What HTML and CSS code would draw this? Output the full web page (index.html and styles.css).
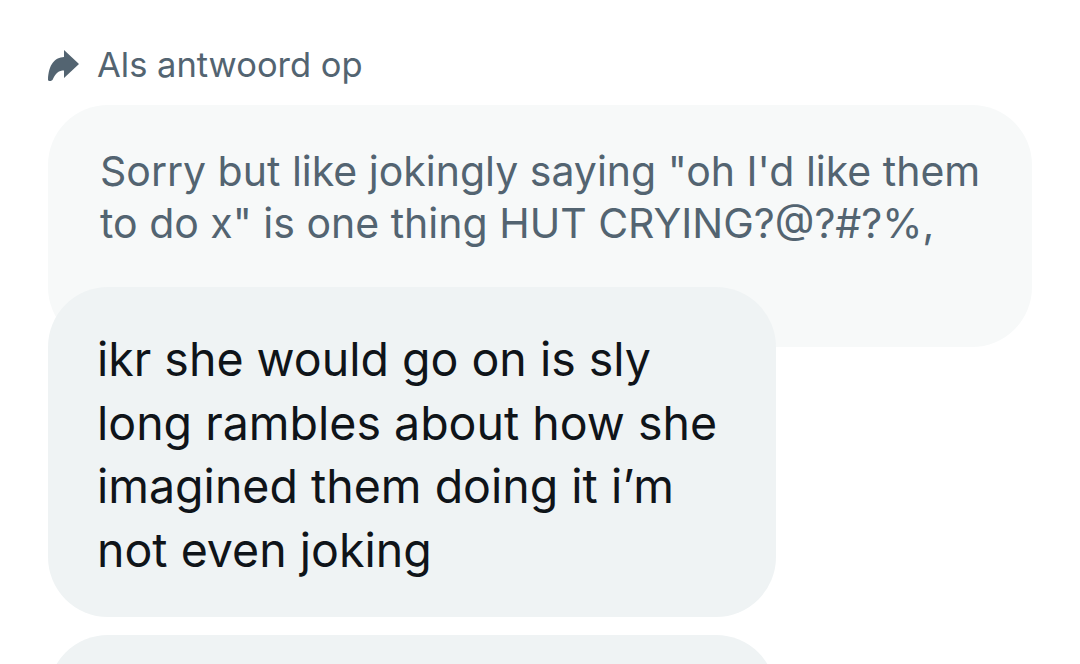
FILE: index.html
```html
<!DOCTYPE html>
<html>
<head>
<meta charset="utf-8">
<link rel="stylesheet" href="styles.css">
</head>
<body>
<div class="thread">
  <div class="reply-label">
    <svg class="reply-icon" viewBox="44 46 40 38" aria-hidden="true"><path d="M79 64 L64 50 V57 C55 57.5 48.5 64 48 80 C48.5 81.5 52 81.5 53 79 C55.5 73 59 70.5 64 70.5 V78 Z"/></svg>
    <span>Als antwoord op</span>
  </div>
  <div class="quote">
    <p class="quote-text">Sorry but like jokingly saying "oh I'd like them to do x" is one thing HUT CRYING?@?#?%,</p>
  </div>
  <div class="bubble">
    <p class="bubble-text">ikr she would go on is sly long rambles about how she imagined them doing it i’m not even joking</p>
  </div>
  <div class="bubble next"></div>
</div>
</body>
</html>
```
FILE: styles.css
```css
* { box-sizing: border-box; }
html, body { margin: 0; padding: 0; background: #ffffff; }
body { width: 1080px; height: 664px; overflow: hidden; font-family: Inter, "Noto Sans", sans-serif; }
.thread { padding: 43px 48px 0 48px; display: flex; flex-direction: column; align-items: flex-start; }
.reply-label { display: flex; align-items: center; gap: 13px; color: #536471; font-size: 34.5px; line-height: 44px; height: 44px; margin-bottom: 18px; }
.reply-icon { width: 40px; height: 38px; fill: #536471; margin-left: -4px; flex: none; }
.quote { width: 984px; height: 242px; background: #f7f9f9; border-radius: 60px; padding: 41px 30px 0 52px; }
.quote-text { margin: 0; color: #536471; font-size: 41px; line-height: 51.5px; }
.bubble { width: 728px; height: 330px; background: #eff3f4; border-radius: 60px; margin-top: -60px; padding: 41px 30px 0 49px; }
.bubble-text { margin: 0; color: #0f1419; font-size: 46.5px; line-height: 63.5px; }
.bubble.next { margin-top: 18px; height: 120px; }
```
